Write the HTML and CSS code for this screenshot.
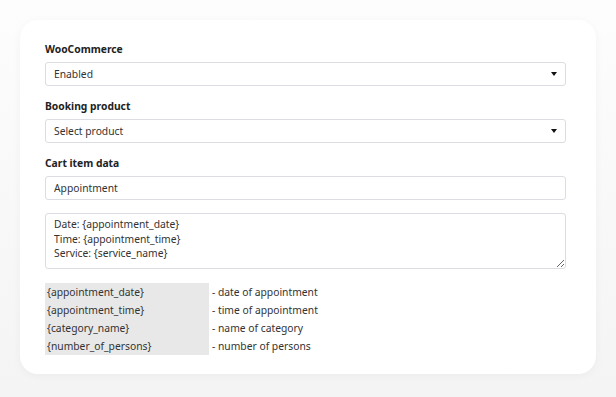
FILE: index.html
```html
<!DOCTYPE html>
<html lang="en">
<head>
  <meta charset="UTF-8" />
  <title>WooCommerce settings</title>
  <link rel="stylesheet" href="styles.css">
</head>
<body>

  <div class="card">
    <label class="field-label">WooCommerce</label>
    <div class="select-wrap">
      <select class="field">
        <option>Enabled</option>
        <option>Disabled</option>
      </select>
    </div>

    <label class="field-label">Booking product</label>
    <div class="select-wrap">
      <select class="field">
        <option>Select product</option>
      </select>
    </div>

    <label class="field-label">Cart item data</label>
    <input class="field text-input" type="text" value="Appointment" />

    <textarea class="field text-area">Date: {appointment_date}
Time: {appointment_time}
Service: {service_name}</textarea>

    <table class="codes">
      <tr><td class="code">{appointment_date}</td><td class="desc">- date of appointment</td></tr>
      <tr><td class="code">{appointment_time}</td><td class="desc">- time of appointment</td></tr>
      <tr><td class="code">{category_name}</td><td class="desc">- name of category</td></tr>
      <tr><td class="code">{number_of_persons}</td><td class="desc">- number of persons</td></tr>
    </table>
  </div>

</body>
</html>
```

FILE: styles.css
```css
body {
  margin: 0;
  padding: 20px 20px 0 20px;
  height: 397px;
  box-sizing: border-box;
  background: linear-gradient(to bottom, #fdfdfd, #f4f4f4);
  font-family: 'Noto Sans', 'Open Sans', sans-serif;
  color: #333;
  overflow: hidden;
}

.card {
  width: 576px;
  box-sizing: border-box;
  background: #fff;
  border-radius: 18px;
  box-shadow: 0 2px 10px rgba(0, 0, 0, 0.04);
  padding: 21px 30px 19px 25px;
  display: flex;
  flex-direction: column;
}

.field-label {
  font-size: 10.3px;
  font-weight: bold;
  line-height: 16px;
  color: #222;
  margin-bottom: 5px;
}

.field {
  display: block;
  width: 100%;
  box-sizing: border-box;
  font-family: 'Noto Sans', 'Open Sans', sans-serif;
  font-size: 10.3px;
  color: #333;
  background: #fff;
  border: 1px solid #dcdde3;
  border-radius: 3px;
  outline: none;
  margin: 0;
}

.select-wrap {
  position: relative;
  margin-bottom: 12px;
}

.select-wrap::after {
  content: "";
  position: absolute;
  right: 9px;
  top: 10px;
  border-left: 3.5px solid transparent;
  border-right: 3.5px solid transparent;
  border-top: 4px solid #111;
  pointer-events: none;
}

select.field {
  -webkit-appearance: none;
  appearance: none;
  height: 24px;
  padding: 0 8px;
}

.text-input {
  height: 24px;
  padding: 0 8px;
  margin-bottom: 13px;
}

.text-area {
  height: 56px;
  padding: 3px 8px;
  line-height: 14.5px;
  resize: vertical;
  margin-bottom: 14px;
}

.codes {
  border-collapse: collapse;
  font-size: 10.3px;
}

.codes td {
  height: 18px;
  padding: 0;
  line-height: 18px;
}

.codes .code {
  width: 164px;
  background: #e8e8e8;
  padding-left: 2px;
  box-sizing: border-box;
  color: #333;
}

.codes .desc {
  padding-left: 3px;
  color: #333;
}
```
